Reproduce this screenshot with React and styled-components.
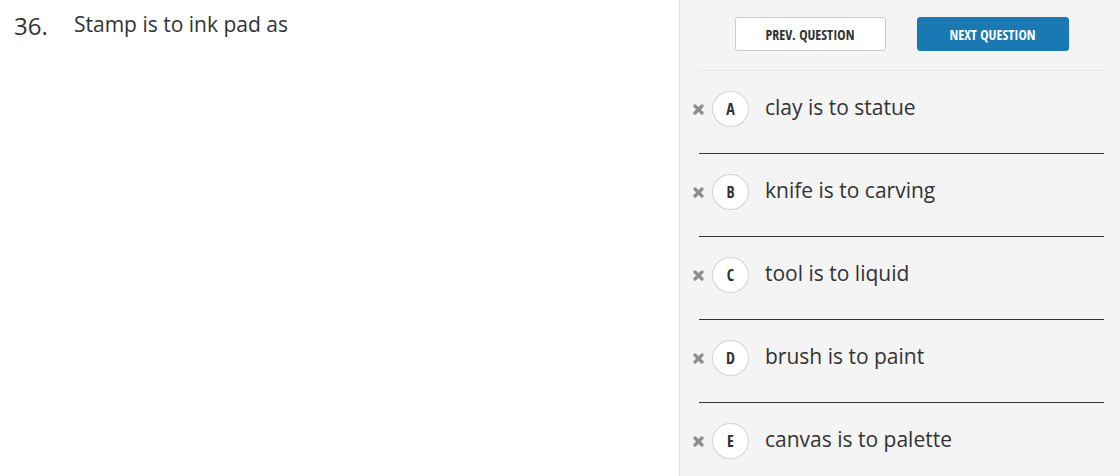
import styled, { createGlobalStyle } from "styled-components";

const GlobalStyle = createGlobalStyle`
    html, body {
        margin: 0;
        padding: 0;
        background: #ffffff;
        font-family: "Open Sans", "Liberation Sans", sans-serif;
        color: #333333;
    }
    * {
        box-sizing: border-box;
    }
`

const options = [
    { letter: "A", text: "clay is to statue" },
    { letter: "B", text: "knife is to carving" },
    { letter: "C", text: "tool is to liquid" },
    { letter: "D", text: "brush is to paint" },
    { letter: "E", text: "canvas is to palette" },
]

const CrossIcon = () => (
    <svg width="11" height="11" viewBox="0 0 11 11">
        <path d="M2 2 L9 9 M9 2 L2 9" stroke="#8e8e8e" strokeWidth="3.2" strokeLinecap="round" />
    </svg>
)

const App = () => {
    return (
        <>
            <GlobalStyle />
            <Page>
                <QuestionPane>
                    <Number>36.</Number>
                    <Prompt>Stamp is to ink pad as</Prompt>
                </QuestionPane>
                <AnswerPane>
                    <Nav>
                        <NavButton>PREV. QUESTION</NavButton>
                        <NavButton primary>NEXT QUESTION</NavButton>
                    </Nav>
                    <List>
                        {options.map((o) => (
                            <Option key={o.letter}>
                                <Strike><CrossIcon /></Strike>
                                <Letter>{o.letter}</Letter>
                                <Answer>{o.text}</Answer>
                            </Option>
                        ))}
                    </List>
                </AnswerPane>
            </Page>
        </>
    )
}

const Page = styled.div`
    display: flex;
    width: 1120px;
    height: 476px;
    overflow: hidden;
`

const QuestionPane = styled.div`
    width: 679px;
    flex-shrink: 0;
    display: flex;
    align-items: flex-start;
    padding: 9px 0 0 14px;
`

const Number = styled.div`
    font-size: 24px;
    line-height: 34px;
    width: 60px;
`

const Prompt = styled.div`
    font-size: 21px;
    line-height: 30px;
`

const condensed = `
    font-family: "Open Sans Condensed", "Liberation Sans Narrow", "DejaVu Sans Condensed", "DejaVu Sans", sans-serif;
    font-stretch: condensed;
    font-weight: 700;
`

const NavButton = styled.button`
    width: ${(p) => (p.primary ? "152px" : "151px")};
    height: 34px;
    border-radius: 3px;
    border: 1px solid ${(p) => (p.primary ? "#1a78b3" : "#cccccc")};
    background: ${(p) => (p.primary ? "#1a78b3" : "#ffffff")};
    color: ${(p) => (p.primary ? "#ffffff" : "#333333")};
    ${condensed}
    font-size: 14px;
    padding: 0;
    cursor: pointer;
`

const AnswerPane = styled.div`
    flex: 1;
    background: #f4f4f4;
    border-left: 1px solid #e3e3e3;
    padding: 0 16px 0 19px;
`

const Nav = styled.div`
    display: flex;
    justify-content: center;
    gap: 31px;
    padding: 17px 0 19px;
    border-bottom: 1px solid #e8e8e8;
`

const List = styled.div`
    display: flex;
    flex-direction: column;
`

const Option = styled.div`
    display: flex;
    align-items: flex-start;
    padding: 20px 0 26px;
    border-bottom: 1px solid #333333;
`

const Strike = styled.div`
    display: flex;
    align-items: center;
    margin-left: -6px;
    margin-right: 8px;
    height: 36px;
`

const Letter = styled.div`
    width: 37px;
    height: 36px;
    border-radius: 50%;
    border: 1px solid #d4d4d4;
    background: #ffffff;
    display: flex;
    align-items: center;
    justify-content: center;
    ${condensed}
    font-size: 16px;
    color: #333333;
    margin-right: 16px;
    flex-shrink: 0;
`

const Answer = styled.div`
    font-size: 21px;
    line-height: 30px;
    padding-top: 1px;
    color: #333333;
`

export default App
